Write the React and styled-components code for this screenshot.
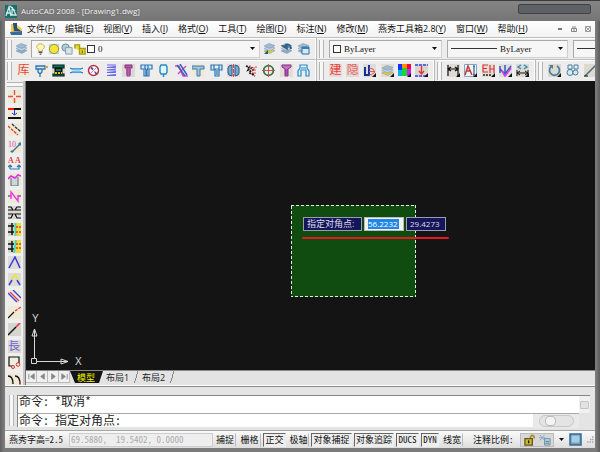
import React from "react";
import styled, { createGlobalStyle, css } from "styled-components";

const Global = createGlobalStyle`
  *, *::before, *::after { box-sizing: border-box; }
  body { margin: 0; background: #6e6e6e; font-family: "Open Sans", "Noto Sans CJK SC", sans-serif; font-size: 9px; color: #111; }
  button, input, select { font: inherit; color: inherit; margin: 0; padding: 0; border: 0; background: none; border-radius: 0; }
  svg { display: block; }
`;

const Frame = styled.div`
  display: flex;
  flex-direction: column;
  min-height: 100vh;
  padding: 0 5px 4px;
  overflow: hidden;
  background: linear-gradient(90deg, #606060, #7b7b7b 4px, #7b7b7b calc(100% - 4px), #5c5c5c);
`;

const TitleBar = styled.header`
  display: flex;
  align-items: center;
  height: 21px;
  margin: 0 -5px;
  padding: 0 9px 0 5px;
  gap: 4px;
  border-top: 1px solid #3c3c3c;
  background: linear-gradient(#858585, #757575);
  color: #f4f4f4;
  text-shadow: 0 0 2px #555;
`;

const Title = styled.h1`
  flex: 1;
  margin: 0;
  font: 8px/18px "Open Sans", sans-serif;
  white-space: nowrap;
`;

const CaptionBox = styled.div`
  align-self: flex-start;
  width: 73px;
  height: 10px;
  margin-top: 3px;
  border: 1px solid #3f4145;
  border-radius: 2px;
  background: #5e6165;
`;

const MenuBar = styled.nav`
  display: flex;
  align-items: center;
  height: 16px;
  padding: 0 4px 0 5px;
  background: linear-gradient(#ffffff, #f2f2f2);
`;

const MenuItems = styled.div`
  display: flex;
  flex: 1;
  gap: 10px;
  padding-left: 4px;
`;

const MenuItem = styled.button`
  flex: none;
  line-height: 14px;
  white-space: nowrap;
  u { text-decoration-thickness: 1px; }
`;

const WindowButtons = styled.div`
  display: flex;
  gap: 8px;
`;

const PlainButton = styled.button`
  display: block;
  flex: none;
`;

const ToolRow = styled.div`
  display: flex;
  height: 22px;
  overflow: hidden;
  border-top: 1px solid #bdbdbd;
  background: #ededed;
  box-shadow: inset 0 1px #fff;
`;

const ToolGroup = styled.div`
  display: flex;
  align-items: center;
  flex: none;
  gap: ${(p) => p.$gap || 5}px;
  width: ${(p) => (p.$w ? p.$w + "px" : "auto")};
  padding: 0 6px 0 2px;
  border-right: 1px solid #b8b8b8;
  box-shadow: inset -1px 0 #fff;
`;

const FillTools = styled.div`
  display: flex;
  flex: 1;
  justify-content: space-between;
`;

const gripShapes = {
  row: css`width: 5px; height: 18px; border-width: 0 1px;`,
  flat: css`width: 16px; height: 5px; border-width: 1px 0;`,
  tall: css`width: 5px; height: 31px; border-width: 0 1px; margin-right: 3px;`,
};

const Grip = styled.span`
  display: block;
  flex: none;
  border-style: solid;
  border-color: #b5b5b5;
  background: #f7f7f7;
  ${(p) => gripShapes[p.$shape || "row"]}
`;

const IconButton = styled.button`
  display: grid;
  place-items: center;
  flex: none;
  width: 13px;
  height: 13px;
  background: ${(p) => p.$bg || "transparent"};
  color: ${(p) => p.$color || "inherit"};
  font: 12px/13px "Liberation Serif", "Noto Sans CJK SC", serif;
  overflow: hidden;
`;

const Combo = styled.div`
  display: flex;
  align-items: center;
  flex: none;
  gap: 3px;
  width: ${(p) => p.$w}px;
  height: 18px;
  padding: 0 4px 0 3px;
  border: 1px solid #a8a8a8;
  border-right-color: #d0d0d0;
  border-bottom-color: #d0d0d0;
  background: #f6f6f6;
  font: 9px "Liberation Serif", serif;
`;

const ComboSelect = styled.select`
  appearance: none;
  flex: 1;
  min-width: 0;
  height: 16px;
`;

const Arrow = styled.span`
  flex: none;
  width: 5px;
  height: 3px;
  background: #111;
  clip-path: polygon(0 0, 100% 0, 50% 100%);
`;

const LineSample = styled.span`
  width: 46px;
  flex: none;
  border-top: 1px solid #333;
`;

const Swatch = styled.span`
  flex: none;
  width: 8px;
  height: 8px;
  border: 1px solid #333;
  background: #fff;
`;

const LayerIcons = styled.span`
  display: flex;
  flex: none;
  gap: 1px;
  align-items: center;
`;

const Workspace = styled.main`
  display: grid;
  grid-template-columns: 20px minmax(0, 1fr);
  flex: 1;
  background: #eee;
`;

const SideBar = styled.div`
  height: 304px;
  padding: 1px 2px 0;
  overflow: hidden;
  border-right: 2px solid #c4c4c4;
`;

const SideIcons = styled.div`
  display: flex;
  flex-direction: column;
  align-items: center;
  justify-content: space-between;
  height: 299px;
  padding-top: 3px;
`;

const DrawingPane = styled.div`
  display: flex;
  flex-direction: column;
  min-width: 0;
  border-left: 1px solid #777;
`;

const Canvas = styled.section`
  position: relative;
  flex: 1;
  overflow: hidden;
  background: #141414;
`;

const Selection = styled.div`
  position: absolute;
  left: 265px;
  top: 124px;
  width: 125px;
  height: 92px;
  background: #104c10;
  svg { width: 100%; height: 100%; }
`;

const DynamicInput = styled.label`
  position: absolute;
  left: 277px;
  top: 136px;
  display: flex;
  gap: 2px;
  color: #dcdce8;
`;

const Prompt = styled.span`
  width: ${(p) => p.$w}px;
  height: 14px;
  padding-left: 3px;
  border: 1px solid #9a9ab2;
  background: #15155a;
  font-size: ${(p) => (p.$number ? 8 : 9)}px;
  line-height: 12px;
  white-space: nowrap;
`;

const ValueBox = styled.span`
  width: 40px;
  height: 14px;
  padding: 1px 3px;
  border: 1px solid #b9bdb9;
  background: #f3f3f3;
`;

const ValueInput = styled.input`
  display: block;
  width: 31px;
  height: 10px;
  background: #2186e8;
  color: #fff;
  font-size: 8px;
  line-height: 10px;
  outline: 0;
`;

const RedMark = styled.div`
  position: absolute;
  left: 276px;
  top: 156px;
  width: 147px;
  height: 2px;
  border-radius: 1px;
  background: #e01b22;
`;

const Ucs = styled.svg`
  position: absolute;
  left: 4px;
  bottom: 0;
  fill: none;
  stroke: #d8d8d8;
  font: 10px "Liberation Sans", sans-serif;
  text { fill: #d8d8d8; stroke: none; }
`;

const TabBar = styled.div`
  display: flex;
  height: 16px;
  background: #e3e3e3;
  border-top: 1px solid #888;
`;

const TabNav = styled.button`
  display: grid;
  place-items: center;
  width: 11px;
  height: 12px;
  border-right: 1px solid #bbb;
  border-bottom: 1px solid #bbb;
  background: #f0f0f0;
`;

const Tab = styled.button`
  width: ${(p) => (p.$active ? 33 : 36)}px;
  height: 12px;
  padding-left: ${(p) => (p.$active ? 7 : 3)}px;
  line-height: 11px;
  text-align: left;
  white-space: nowrap;
  background: ${(p) =>
    p.$active ? "#141414" : "linear-gradient(107deg, transparent 33px, #888 33px, #888 34px, transparent 34px)"};
  clip-path: ${(p) => (p.$active ? "polygon(0 0, 100% 0, calc(100% - 4px) 100%, 5px 100%)" : "none")};
  color: ${(p) => (p.$active ? "#f3f300" : "#222")};
`;

const CommandArea = styled.section`
  display: flex;
  height: 44px;
  padding: 8px 5px 3px 4px;
  border-top: 1px solid #888;
  background: #e4e4e4;
  box-shadow: 0 -1px #fff;
`;

const CommandText = styled.div`
  flex: 1;
  min-width: 0;
  border: 1px solid #858585;
  border-width: 1px 0 0 1px;
  background: #fff;
  font: 12px/18px "Noto Sans CJK SC", sans-serif;
  font-feature-settings: "hwid";
  color: #1c1c1c;
`;

const CommandLine = styled.label`
  display: flex;
  height: ${(p) => (p.$prompt ? 15 : 17)}px;
  line-height: ${(p) => (p.$prompt ? 12 : 10)}px;
  padding-left: 1px;
  white-space: pre;
  ${(p) => p.$prompt && css`border-top: 1px solid #aaa;`}
`;

const CommandInput = styled.input`
  flex: 1;
  min-width: 0;
  outline: 0;
`;

const VScroll = styled.span`
  width: 11px;
  height: 18px;
  padding: 5px 1px 4px;
  border-top: 1px solid #858585;
  background: #f0f0f0;
  &::before { content: ""; display: block; height: 8px; border: 1px solid #c5c5c5; border-radius: 1px; background: #e2e2e2; }
`;

const HScroll = styled.span`
  width: 46px;
  height: 14px;
  padding: 1px 5px 1px 6px;
  background: #e9e9e9;
`;

const Pill = styled.span`
  display: block;
  height: 12px;
  padding-left: 5px;
  border: 1px solid #c7c7c7;
  border-radius: 6px;
  background: #e4e4e4;
  &::before { content: ""; display: block; width: 11px; height: 10px; border: 1px solid #bbb; border-radius: 4px; background: #f4f4f4; }
`;

const StatusBar = styled.footer`
  display: flex;
  align-items: center;
  height: 18px;
  padding: 0 1px 0 4px;
  overflow: hidden;
  border-top: 1px solid #a5a5a5;
  background: linear-gradient(#fafafa, #dedede);
  font: 9px/14px "Noto Sans CJK SC", sans-serif;
  font-feature-settings: "hwid";
  white-space: pre;
`;

const StatusLabel = styled.span`
  width: ${(p) => p.$w}px;
  padding-left: ${(p) => p.$pad || 0}px;
  flex: none;
`;

const Coordinates = styled.output`
  flex: 1;
  min-width: 0;
  height: 14px;
  margin-right: 1px;
  padding-left: 1px;
  border: 1px solid #ccc;
  background: #eee;
  color: #aaa;
  line-height: 12px;
`;

const Toggle = styled.button`
  flex: none;
  height: 14px;
  width: ${(p) => p.$w}px;
  margin-right: 2px;
  border: 1px solid transparent;
  border-right-color: #bbb;
  text-align: center;
  line-height: 12px;
  &[aria-pressed="true"] {
    border-color: #666 transparent transparent #666;
    background: #eee;
  }
`;

const StatusTray = styled.div`
  display: flex;
  align-items: center;
  gap: 3px;
  width: 34px;
  height: 14px;
  padding-left: 3px;
  border: 1px solid #bbb;
  background: #d8d8d8;
`;

const TrayEnd = styled.div`
  display: flex;
  flex: none;
  align-items: center;
  gap: 5px;
  padding-left: 5px;
`;

const P = ({ d, c = "#111", w = 1, f = "none", dash }) => (
  <path d={d} stroke={c} strokeWidth={w} fill={f} strokeDasharray={dash} />
);
const Svg = ({ children, size = 13, label }) => (
  <svg width={size} height={size} viewBox="0 0 13 13" role={label ? "img" : undefined} aria-label={label} aria-hidden={!label}>{children}</svg>
);

const blue = "#2d74b5";
const paper = "#efe9d8";
const Corner = () => <P d="M13 9v4H9z" c="none" f="#111" />;

const Layers = ({ tone = "#8babc8" }) => (
  <>
    <P d="M1 9l5-2.500 6 2-5 3z" c="#7893a8" w={0.5} f={tone} />
    <P d="M1 6.500L6 4l6 2-5 3z" c="#7893a8" w={0.5} f="#bdd1e2" />
    <P d="M1 4l5-2.500 6 2-5 3z" c="#7893a8" w={0.5} f="#9ebbd3" />
  </>
);

const mainTools = [
  ["图库", null, { glyph: "库", bg: paper, color: "#e64440" }],
  ["螺丝", <><P d="M1 2h9v3H1zM3 5v3l2 2 2-2V5M5 10v3" c={blue} f="#d6e7f2" w={1.3} /><P d="M10 3h3" c="#c5a45a" w={2} /></>, { bg: "#efede2" }],
  ["弹簧座", <><P d="M1 1h11v3H1zM1 10h11v2H1z" c="#062d24" f="#087159" w={1.2} /><P d="M3 4h7v6H3z" f="#151515" /><P d="M4 6h5" c="#1a8c80" w={1.5} /><P d="M3 9h7" c="#d8c900" w={2} dash="2 1" /></>, { bg: "#ddd9cd" }],
  ["销钉", <><P d="M0 4q2 1 3 1h7l3-1M0 9l3-1h7l3 1" c="#2482ca" w={1.3} /><P d="M3 6.500h7" c="#9cd8f1" w={2} /></>, {}],
  ["定位圈", <><circle cx="6.500" cy="6.500" r="5" fill="#fff" stroke="#bd3042" strokeWidth="1.500" /><P d="M3 3l7 7M10 3l-7 7" c="#e08088" /><P d="M4 3.500l2 2M8 8l1.500 2" c="#4050c0" w={1.8} /></>, {}],
  ["弹簧", <P d="M2 1h9M2 3.500l9-1M2 3.500h9M2 6l9-1M2 6h9M2 8.500l9-1M2 8.500h9M2 11.500l9-1M2 11.500h9" c="#6664ea" w={1.1} />, {}],
  ["螺栓", <><P d="M3 1h7v3H3z" c="#86307e" f="#b75ba9" /><P d="M5 4h3v8H5zM4 6h5M4 8h5M4 10h5" c="#9c3895" f="#c789c0" /></>, { bg: "#ddd8d3" }],
  ["衬套", <P d="M1 1h11v4H9v7H4V5H1zM5 1v3l1 2v6M8 1v3L7 6v6" c={blue} f="#d7e8f2" w={1.2} />, {}],
  ["顶针", <><P d="M4 1h5l1 2v5L9 10H4L3 8V3z" c="#2489cc" f="#e1f5fa" w={1.4} /><P d="M6.500 10v3" c="#2489cc" w={1.5} /></>, { bg: "#f1eee0" }],
  ["斜导柱", <><P d="M0 2h4l4 10h5M3 10l8-8" c="#e23dda" w={1.5} /><P d="M2 1l8 11M5 0l7 11" c="#3765af" w={1.5} /></>, {}],
  ["浇口", <P d="M0 2h12v3H8v7H5V5H0z" c="#3e7da8" f="#a3c4d7" />, { bg: paper }],
  ["镶件", <P d="M1 1h11v5H9v6H5V6H1zM4 1v4h5V1M7 6v5" c="#2d76b2" f="#d2e6f2" w={1.2} />, {}],
  ["水路", <><P d="M5 1v11L2 11 1 9V4l1-2zM8 1v11l3-1 1-2V4l-1-2z" c="#245a91" f="#76a8ce" /><P d="M6.500 0v13" c="#e04242" dash="4 1" /></>, { bg: "#ead9d2" }],
  ["修剪", <><P d="M1 2l3 1-1 3 4-2 1 2-4 2 2 2h3M7 10l3 2" c="#171717" w={1.8} dash="2 1" /><P d="M5 1v3h6V1M8 5v7M10 5v5" c="#e64343" dash="2 1" /></>, {}],
  ["孔位", <><circle cx="6.500" cy="6.500" r="4.800" fill="#e4eee4" stroke="#327051" strokeWidth="1.800" /><P d="M6.500 0v13M0 6.500h13" c="#cb5048" /></>, { bg: "#f1efe5" }],
  ["螺杆", <P d="M2 1h9v2L8 5v7H5V5L2 3zM5 6h3M5 8h3M5 10h3" c="#8b2c92" f="#bd73bd" />, { bg: "#e4ddd7" }],
  ["拉料杆", <P d="M3 1h7v3l2 3v5H9V6H4v6H1V7l2-3zM4 4h5" c="#2987ca" f="#e5f4fa" w={1.2} />, {}],
];

const displayTools = [
  ["新建", null, { glyph: "建", bg: "#ead8d6", color: "#e64440" }],
  ["隐藏", null, { glyph: "隐", bg: "#e3d9d5", color: "#e66460" }],
  ["选择图层", <><P d="M2 3v8h4V1v10" c="#1731a0" w={2} /><P d="M6 4q5 0 6 4-3 3-6 3M6 7.500h5" c="#db594e" /><Corner /></>, { bg: "#ddd" }],
  ["图层", <><Layers tone="#e4ca38" /><Corner /></>, { bg: "#e0ddd2" }],
  ["颜色", <><path d="M0 0h4v6H0z" fill="#1430ff"/><path d="M4 0h5v4H4z" fill="#ff8d00"/><path d="M9 0h4v5H9z" fill="#f03"/><path d="M0 6h4v6H0z" fill="#00b7d9"/><path d="M4 4h5v8H4z" fill="#18d830"/><path d="M9 5h4v7H9z" fill="#ca20ff"/><Corner /></>, {}],
  ["间距", <><P d="M0 1h13M0 12h13" c="#3044ed" w={1.5} dash="3 1" /><P d="M6.500 2v8M4 7l2.500 3L9 7" c="#e8302d" w={1.3} /><Corner /></>, { bg: "#d9d5cc" }],
];

const dimensionTools = [
  ["线性标注", <><P d="M1 1v11M11 1v11M1 5h10M4 3L1 5l3 2M8 3l3 2-3 2" w={1.2} /><Corner /></>, { bg: "#dedbd3" }],
  ["文字", <><P d="M.5.5h12v12H.5z" c="#7fa8c8" f="#eef5fa" /><P d="M1 11L4 2l4 9M2 7h5" c="#c83832" w={1.5} /><P d="M10 2v9M9 2h2M9 11h2" c="#273f66" /><Corner /></>, {}],
  ["高度", <><P d="M6 1H1v7h5M1 4.500h4M8 1v8M12 1v8M8 5h4" c="#db3538" w={1.2} /><P d="M1 11h8" c="#222" w={1.5} dash="2 1" /><Corner /></>, { bg: "#e4ddd6" }],
  ["刷新标注", <><P d="M1 2v7M6 1v8M1 5l5 5 6-8" c="#345abb" w={1.5} /><P d="M3 7l3 5 6-8" c="#d63ce8" w={1.7} /><Corner /></>, { bg: "#ddd" }],
  ["间隔标注", <><P d="M5 1L2 3l3 2M8 1l3 2-3 2" c="#2788c5" w={1.3} /><P d="M1 6v6M12 6v6M1 9h11M4 7L1 9l3 2M9 7l3 2-3 2" /><Corner /></>, { bg: "#ddd9cd" }],
];

const modifyTools = [
  ["旋转", <><path d="M4 2A5 5 0 1 0 9 2" fill="none" stroke="#477da1" strokeWidth="1.700" /><P d="M1 1h4v4z" f="#477da1" c="none" /><Corner /></>, { bg: "#ddd9cd" }],
  ["复制", <><circle cx="4" cy="8.500" r="3" fill="#dbe9ef" stroke="#477da1"/><circle cx="9.500" cy="8.500" r="2.500" fill="#dbe9ef" stroke="#477da1"/><P d="M2 1h4v4H2zM8 1h4v4H8z" c="#477da1" /></>, {}],
  ["直线", <><P d="M1 12L12 1" c="#426787" w={1.3} /><P d="M0 12h4" /></>, { bg: "#ddd9cd" }],
];

const halfYellow = "linear-gradient(90deg, #d5d5cc 50%, #f0dc38 50%)";

const sideTools = [
  ["十字", <P d="M6.500 0v5M6.500 8v5M0 6.500h5M8 6.500h5" c="#e25245" w={1.4} />, { bg: paper }],
  ["对齐", <><P d="M0 2h6" c="#f11c18" w={2}/><P d="M6 2h7M0 11h13" w={2}/><P d="M6.500 3v5M4 6l2.500 2L9 6" c="#2733e2"/></>, { bg: paper }],
  ["偏移", <><P d="M0 3l10 9" c="#e44534" w={1.4} dash="3 1"/><P d="M4 1l9 8" c="#263b37" w={1.4} dash="3 1"/></>, { bg: paper }],
  ["编号", <><text x="0" y="7" fontSize="8" fill="#d04fd0" fontFamily="Liberation Serif">10</text><P d="M4 12l8-8" c="#37708e" w={1.3}/><P d="M3 11h2v1H3zM11 3h2v2h-2z" c="#327ba9" f="#327ba9"/></>, { bg: paper }],
  ["文字对齐", <><text x="0" y="6" fontSize="8" fontWeight="700" fill="#dd4640" fontFamily="Liberation Serif">A</text><text x="7" y="6" fontSize="8" fontWeight="700" fill="#dd4640" fontFamily="Liberation Serif">A</text><P d="M2 12h9V8M2 12V8M0 10l2-2 2 2M9 10l2-2 2 2" c="#3576b7" w={1.2}/></>, {}],
  ["轮廓", <><P d="M3 5v8h7V4" c="#666" f="#c7d9dd"/><P d="M0 6l3-3 4 2 3-3 3 1" c="#e52ae7" w={1.6}/></>, { bg: paper }],
  ["折断", <><P d="M0 6h3M10 6h3" c="#35302b"/><P d="M3 9V2l7 9V5" c="#ec36e7" w={1.4}/></>, { bg: paper }],
  ["打断", <P d="M0 1h3l2 3H0M13 1H9L7 4h6M0 8h5l-2 4H0M13 8H7l2 4h4" w={1.2}/>, { bg: "#d9d9d2" }],
  ["延伸", <><P d="M0 3h6M0 9h6M4 0v12" w={1.5}/><P d="M7.500 0v13" c="#36d8dd" w={1.8}/><P d="M8 4h5M8 9h5" c="#e33d26" w={1.3} dash="2 1"/></>, { bg: halfYellow }],
  ["修剪边", <><P d="M0 4h6M0 9h6M4 1v11" w={1.5}/><P d="M8 0L6 13" c="#36d8dd" w={1.8}/><P d="M8 4h5M8 8h5" c="#d4452b" w={1.3} dash="2 1"/></>, { bg: halfYellow }],
  ["夹角", <P d="M1 12L7 1l5 11" c="#3936de" w={1.5}/>, { bg: "#dcdbd5" }],
  ["倒角", <><P d="M1 12l3-5M12 12L9 7" c="#3c3de3" w={1.5}/><P d="M4 6l3-4 3 4" c="#eee535" w={1.6}/></>, { bg: "#dedbd1" }],
  ["平行线", <><P d="M0 3l9 9M5 0l8 8" c="#4040dd" w={1.4}/><P d="M2 2l9 9" c="#e7474b" w={1.4}/></>, { bg: "#efede2" }],
  ["中心线", <><P d="M0 12l6-6" w={1.2}/><P d="M7 5l6-4" c="#ef4436" w={1.3} dash="3 1"/></>, { bg: paper }],
  ["连线", <><P d="M0 12l8-8" w={1.5}/><P d="M8 4l4-4" c="#ec3d30" w={1.7}/></>, { bg: "#d5d4ce" }],
  ["长度", null, { glyph: "長", bg: "#dcd8cf", color: "#6968d5" }],
  ["圆角框", <><P d="M11 7V1H1v9h3" w={1.2}/><circle cx="5" cy="11" r="1.500" fill="none" stroke="#db2b2d"/><circle cx="10" cy="8.500" r="1.800" fill="none" stroke="#db2b2d"/></>, { bg: "#efede2" }],
  ["圆弧", <><P d="M0 3q5 0 5 8M7 3q5 0 5 8" w={1.4}/><P d="M12 8v4" c="#db4f47"/></>, { bg: paper }],
];

const Tools = ({ items }) =>
  items.map(([name, art, o]) => (
    <IconButton key={name} aria-label={name} $bg={o.bg} $color={o.color}>
      {o.glyph || <Svg>{art}</Svg>}
    </IconButton>
  ));

const menus = [
  ["文件", "F"], ["编辑", "E"], ["视图", "V"], ["插入", "I"], ["格式", "O"], ["工具", "T"],
  ["绘图", "D"], ["标注", "N"], ["修改", "M"], ["燕秀工具箱2.8", "Y"], ["窗口", "W"], ["帮助", "H"],
];

const toggles = [
  ["捕捉", 22, false], ["栅格", 23, false], ["正交", 23, true], ["极轴", 21, false],
  ["对象捕捉", 41, true], ["对象追踪", 40, true], ["DUCS", 23, true], ["DYN", 18, true], ["线宽", 22, false],
];

const navs = [
  ["第一个", "M2 2v6M8 2v6L4 5z"], ["上一个", "M7 2v6L3 5z"], ["下一个", "M3 2v6l4-3z"], ["最后一个", "M8 2v6M2 2v6l4-3z"],
];

export default function App() {
  return (
    <>
      <Global />
      <Frame>
        <TitleBar>
          <svg width="12" height="13" viewBox="0 0 12 13" aria-hidden="true">
            <path d="M0 0h12v13H0z" fill="#176f6b" />
            <path d="M1 11L4 2l2 9M1 8h5M7 2l4 8H7zM5 1l5 5" fill="none" stroke="#cdebe7" strokeWidth="1.300" />
          </svg>
          <Title>AutoCAD 2008 - [Drawing1.dwg]</Title>
          <CaptionBox />
        </TitleBar>

        <MenuBar>
          <svg width="13" height="13" viewBox="0 0 13 13" aria-hidden="true">
            <path d="M1 1h5l6 5v6H1z" fill="#f2c84b" />
            <path d="M3 0h4v5l4 3H4z" fill="#24517d" />
            <path d="M0 9l12-1v4H1z" fill="#376e98" />
          </svg>
          <MenuItems>
            {menus.map(([name, key]) => (
              <MenuItem key={name}>{name}(<u>{key}</u>)</MenuItem>
            ))}
          </MenuItems>
          <WindowButtons>
            <PlainButton aria-label="最小化"><svg width="6" height="6"><path d="M1 3h4" stroke="#777" strokeWidth="2" /></svg></PlainButton>
            <PlainButton aria-label="还原"><svg width="6" height="6"><path d="M.5 2.500h5v3h-5zM1 1h4M2 4h2" stroke="#888" fill="none" /></svg></PlainButton>
            <PlainButton aria-label="关闭"><svg width="6" height="6"><path d="M.5.5h5v5h-5zM1 1l4 4M5 1L1 5" stroke="#999" fill="none" /></svg></PlainButton>
          </WindowButtons>
        </MenuBar>

        <ToolRow>
          <ToolGroup $w={312} $gap={3}>
            <Grip />
            <IconButton aria-label="图层特性"><Svg><Layers /></Svg></IconButton>
            <Combo $w={229}>
              <LayerIcons>
                <Svg size={12}><P d="M4 9V7L2 5V3l2-2h4l2 2v2L8 7v2z" c="#b9ac60" f="#fff8ac"/><P d="M4 10h4M5 12h2" c="#555" w={1.4}/></Svg>
                <Svg size={12}><P d="M1 1h11v11H1z" c="none" f="#b6dcdf"/><circle cx="6.500" cy="6.500" r="5" fill="#f4e43c" stroke="#998d31"/></Svg>
                <Svg size={12}><circle cx="5" cy="5" r="4" fill="#b5cad2" stroke="#648b9e"/><P d="M5 5h7v7H5z" c="#8799a4" f="#d6e4eb"/></Svg>
                <Svg size={12}><P d="M1 6V2h5v6M6 6h6v6H6z" c="#a39b19" f="#e9dd27" w={1.5}/><P d="M9 8v3" c="#444"/></Svg>
                <Swatch />
              </LayerIcons>
              <ComboSelect aria-label="图层"><option>0</option></ComboSelect>
              <Arrow />
            </Combo>
            <FillTools>
              <IconButton aria-label="当前图层"><Svg><Layers tone="#e4cd35" /><P d="M1 12l4-4v4z" f="#24577d" c="none" /></Svg></IconButton>
              <IconButton aria-label="上一图层"><Svg><Layers /><P d="M11 7c0-5-5-6-6-3M3 4h4v3z" c="#315f85" w={1.6} f="#6492b5" /></Svg></IconButton>
              <IconButton aria-label="图层状态"><Svg><Layers /><P d="M5 5h7v7H5z" c="#2e6b9f" f="#d5eaf6"/><P d="M5 6h7" c="#327fbd" w={2}/></Svg></IconButton>
            </FillTools>
          </ToolGroup>
          <ToolGroup>
            <Grip />
            <Combo $w={113}><Swatch /><ComboSelect aria-label="颜色"><option>ByLayer</option></ComboSelect><Arrow /></Combo>
            <Combo $w={121}><LineSample /><ComboSelect aria-label="线型"><option>ByLayer</option></ComboSelect><Arrow /></Combo>
            <Combo $w={121}><LineSample /><ComboSelect aria-label="线宽"><option>ByLayer</option></ComboSelect><Arrow /></Combo>
          </ToolGroup>
        </ToolRow>

        <ToolRow>
          <ToolGroup $w={312}><Grip /><FillTools><Tools items={mainTools} /></FillTools></ToolGroup>
          <ToolGroup $w={118}><Grip /><FillTools><Tools items={displayTools} /></FillTools></ToolGroup>
          <ToolGroup $w={101}><Grip /><FillTools><Tools items={dimensionTools} /></FillTools></ToolGroup>
          <ToolGroup><Grip /><Tools items={modifyTools} /></ToolGroup>
        </ToolRow>

        <Workspace>
          <SideBar><Grip $shape="flat" /><SideIcons><Tools items={sideTools} /></SideIcons></SideBar>
          <DrawingPane>
            <Canvas>
              <Selection>
                <svg aria-hidden="true"><rect x="0" y="0" width="100%" height="100%" fill="none" stroke="#e1e9e1" strokeWidth="2" strokeDasharray="3 2" /></svg>
              </Selection>
              <DynamicInput>
                <Prompt $w={59}>指定对角点:</Prompt>
                <ValueBox><ValueInput defaultValue="56.2232" aria-label="X" /></ValueBox>
                <Prompt $w={40} $number>29.4273</Prompt>
              </DynamicInput>
              <RedMark />
              <Ucs width="56" height="60" aria-label="坐标系">
                <path d="M1.500 48.500h5v5h-5zM4.500 48v-29M2 26l2.500-7L7 26zM7 51.500h31M31 49l7 2.500-7 2.500z" />
                <text x="2" y="12">Y</text><text x="45" y="55">X</text>
              </Ucs>
            </Canvas>
            <TabBar>
              {navs.map(([name, d]) => (
                <TabNav key={name} aria-label={name}><svg width="9" height="9" viewBox="0 0 10 10"><path d={d} fill="#888" stroke="#888" /></svg></TabNav>
              ))}
              <Tab $active>模型</Tab><Tab>布局1</Tab><Tab>布局2</Tab>
            </TabBar>
          </DrawingPane>
        </Workspace>

        <CommandArea>
          <Grip $shape="tall" />
          <CommandText>
            <CommandLine as="div">命令: *取消*</CommandLine>
            <CommandLine $prompt>命令: 指定对角点:<CommandInput aria-label="命令" /><HScroll><Pill /></HScroll></CommandLine>
          </CommandText>
          <VScroll />
        </CommandArea>

        <StatusBar>
          <StatusLabel $w={60}>燕秀字高=2.5</StatusLabel>
          <Coordinates>69.5880,  19.5402, 0.0000</Coordinates>
          {toggles.map(([name, w, on]) => <Toggle key={name} $w={w} aria-pressed={on}>{name}</Toggle>)}
          <StatusLabel $w={55} $pad={8}>注释比例:</StatusLabel>
          <StatusTray>
            <Svg size={12} label="锁定"><P d="M7 6V3q2-3 4 0v2" c="#a28b20" w={1.7}/><P d="M1 5h8v7H1z" c="#645619" f="#ceb936" w={1.4}/><P d="M5 7v3" w={1.5}/></Svg>
            <Svg size={12} label="注释可见性"><P d="M1 1l5 6M6 1L1 7M0 4h7" c="#84a9c6"/><P d="M6 5h6v7H6z" c="#708d9f" f="#b8d4e3"/><P d="M7 8h4M7 10h4" c="#4e7f9c"/></Svg>
          </StatusTray>
          <TrayEnd>
            <Arrow />
            <PlainButton aria-label="全屏显示"><Svg size={13}><P d="M1 1h11v11H1z" c="#376a91" f="#6da1c4" w={1.5}/><P d="M3 3h7v6H3z" c="#a5cae1" f="#a9cee3"/></Svg></PlainButton>
            <svg width="7" height="7" aria-hidden="true"><path d="M5 1h2M3 3.500h2M5 3.500h2M0 6h7" stroke="#aaa" strokeWidth="1.500" strokeDasharray="1.500 1" /></svg>
          </TrayEnd>
        </StatusBar>
      </Frame>
    </>
  );
}
